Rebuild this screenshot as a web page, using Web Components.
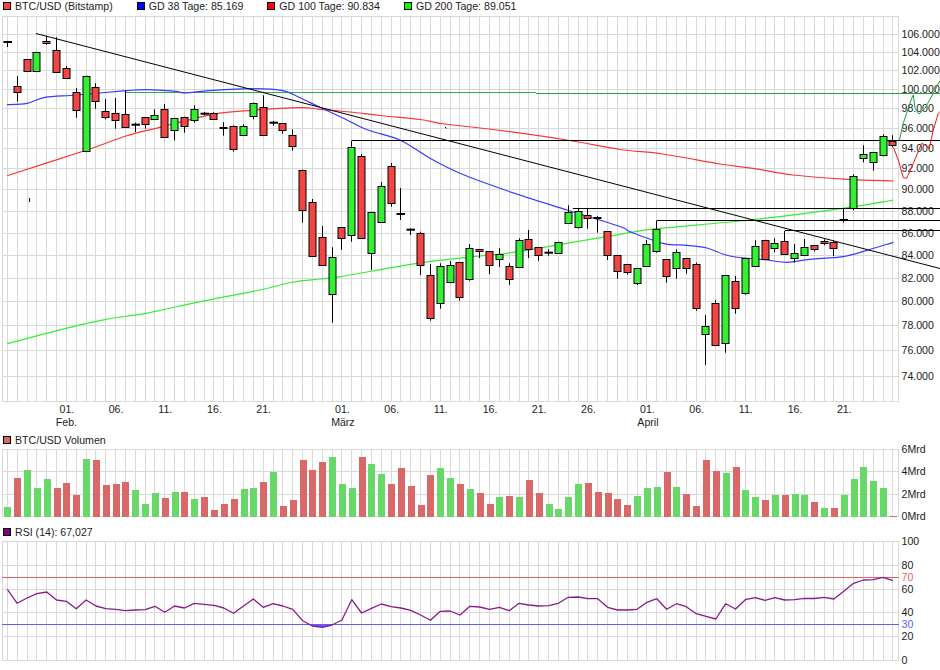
<!DOCTYPE html>
<html>
<head>
<meta charset="utf-8">
<title>BTC/USD</title>
<style>
    html, body { margin: 0; padding: 0; background: #ffffff; overflow: hidden; }
</style>
</head>
<body>
<chart-page>
    <chart-legend>
        <legend-item color="#f44444">BTC/USD (Bitstamp)</legend-item>
        <legend-item color="#0000ff">GD 38 Tage: 85.169</legend-item>
        <legend-item color="#ff0000">GD 100 Tage: 90.834</legend-item>
        <legend-item color="#00ff00">GD 200 Tage: 89.051</legend-item>
    </chart-legend>
    <price-panel></price-panel>
    <chart-legend>
        <legend-item color="#d96868">BTC/USD Volumen</legend-item>
    </chart-legend>
    <volume-panel></volume-panel>
    <chart-legend>
        <legend-item color="#800080">RSI (14): 67,027</legend-item>
    </chart-legend>
    <rsi-panel></rsi-panel>
</chart-page>

<script>
// day i of the chart sits at this x, one grid column per day
const dayX = (i) => 7.35 + i * 9.84;
const snap = (v) => Math.floor(v) + 0.5;
const DAYS = 91;
const RIGHT = 898;
const FONT = "'Liberation Sans', Arial, sans-serif";
const FONT_SIZE = "10.6px";

// [bodyTop, bodyBottom, wickTop, wickBottom, g|r]
const CANDLES = [
    [41.5,42.5,41.5,47,"d"],[85.7,92.3,76,101.7,"r"],[59.3,71.3,59.3,71.3,"r"],[51.7,71.3,51.7,71.3,"g"],
    [41.3,43.3,35.7,44.7,"r"],[49.7,72.3,37.3,72.3,"r"],[67.7,78.3,66,78.3,"r"],[92.3,110.3,88.3,117.7,"r"],
    [75.7,151.3,75.7,151.3,"g"],[86.7,101.3,83.3,108.7,"r"],[110.7,117.3,99,119.3,"r"],[112.7,120.3,98,128.7,"r"],
    [113.7,127.3,90.7,127.3,"r"],[124.2,125.2,122.7,132,"d"],[117.3,124.3,117.3,128.7,"r"],[114.7,119.3,109.3,119.3,"g"],
    [109.3,137.3,104,137.3,"r"],[117.7,130.3,117.7,140.3,"g"],[116.7,126.3,116.7,132.7,"r"],[109.3,120.3,105.3,122.7,"g"],
    [113.2,114.2,112,115.3,"d"],[113.3,119.3,112.3,119.3,"r"],[126.7,128.3,122.3,135.7,"r"],[126.3,149.3,125.3,151.7,"r"],
    [125.7,135.3,124.3,135.3,"g"],[102.7,116.3,102.7,119.3,"g"],[106.7,135.3,95.3,135.3,"r"],[122.2,123.2,121,125.7,"d"],
    [123.3,130.3,123.3,133.7,"r"],[135.3,145.7,129.3,150.7,"r"],[169.5,209.5,169.5,222.7,"r"],[201.5,255.5,199,255.5,"r"],
    [237.3,265.3,226,265.3,"r"],[257.3,294.3,247.3,322.7,"g"],[227.3,238.3,227.3,250,"r"],[147.3,235.3,140.7,241.7,"g"],
    [156.3,238.3,154,238.3,"r"],[211.7,253.3,211.7,270,"g"],[186.3,222.3,182,222.3,"g"],[166.3,203.3,163,206.7,"r"],
    [213.5,214.5,188,220,"d"],[229.2,230.2,228.3,235,"d"],[233.3,265.3,231.7,275,"r"],[275.3,318.3,264,320.7,"r"],
    [266.3,303.3,263.3,308.7,"g"],[265.3,282.3,261,283.3,"g"],[262.3,297.3,262.3,300.7,"r"],[248.3,279.3,244,280.7,"g"],
    [249.3,251.3,249.3,258,"r"],[251.3,265.3,251.3,274,"r"],[254.3,259.3,248.3,267,"g"],[266.3,279.3,263.3,284.7,"r"],
    [240.3,267.3,238.3,267.3,"g"],[239.3,249.3,230,258,"r"],[247.3,255.3,247.3,260.7,"r"],[252.2,253.2,249.3,255.7,"d"],
    [241.7,253.3,241.7,253.3,"g"],[212.3,223.3,205.3,223.3,"g"],[210.7,227.3,208.7,228.7,"g"],[215.3,218.3,208.7,228.7,"r"],
    [216.7,218.3,216,232.7,"r"],[231.3,255.3,231.3,260,"r"],[255.3,271.3,255.3,278.7,"r"],[264.3,272.3,264.3,274.7,"r"],
    [268.3,282.5,268.3,285,"g"],[244.3,266.3,240,266.3,"g"],[228.7,250.7,220.5,252.7,"g"],[259.3,276.3,259.3,282.7,"r"],
    [252.3,268.3,249.3,278.7,"g"],[258.3,268.3,258.3,273.7,"r"],[264.3,308.3,262.7,310.7,"r"],[325.7,334.3,315,365,"g"],
    [303.3,345.3,300,345.3,"r"],[275.3,343.3,275.3,352.7,"g"],[281.3,308.3,276,313.7,"r"],[257.7,293.3,257.7,294.7,"g"],
    [245.7,266.3,240.3,266.3,"g"],[239.7,259.3,239.7,259.3,"r"],[243.3,248.3,238.3,252.3,"g"],[240.7,254.3,231,254.3,"r"],
    [253.3,258.3,244,262.7,"g"],[247.3,255.3,239,255.3,"g"],[245.3,249.3,245.3,251.3,"r"],[241.3,243.3,239.3,245.3,"r"],
    [242.3,248.3,240.7,256,"r"],[219.5,220.5,208.3,222.7,"d"],[176.3,208.3,174.3,210.3,"g"],[154.3,158.3,145.3,162.3,"g"],
    [152.3,162.3,152.3,170.7,"g"],[136.3,155.3,134.3,156.3,"g"],[141.3,145.3,135.3,147.3,"r"]
];

// [top of bar, g|r] per day
const VOLUME = [
    [507,"g"],[478,"r"],[470,"g"],[488,"g"],[479,"g"],[488,"r"],[483,"r"],[495,"r"],[459,"g"],[460,"r"],
    [485,"r"],[484,"r"],[482,"r"],[490,"g"],[504,"g"],[493,"g"],[498,"r"],[492,"g"],[492,"r"],[499,"g"],
    [497,"r"],[510,"r"],[504,"r"],[499,"r"],[489,"g"],[488,"g"],[482,"r"],[472,"g"],[506,"r"],[500,"r"],
    [460,"r"],[470,"r"],[462,"r"],[457,"g"],[484,"g"],[488,"g"],[457,"r"],[464,"g"],[474,"g"],[484,"r"],
    [468,"r"],[486,"r"],[505,"r"],[475,"r"],[468,"g"],[478,"g"],[484,"r"],[489,"g"],[493,"r"],[504,"r"],
    [497,"g"],[496,"r"],[497,"g"],[480,"r"],[493,"r"],[504,"g"],[509,"g"],[497,"g"],[484,"g"],[483,"r"],
    [492,"r"],[493,"r"],[499,"r"],[505,"r"],[496,"g"],[488,"g"],[487,"g"],[472,"r"],[487,"g"],[494,"r"],
    [506,"r"],[460,"r"],[471,"r"],[473,"g"],[467,"r"],[490,"g"],[497,"g"],[500,"r"],[495,"g"],[495,"r"],
    [494,"g"],[495,"g"],[502,"r"],[508,"g"],[508,"r"],[495,"g"],[479,"g"],[467,"g"],[481,"g"],[488,"g"],
    [516,"r"]
];

const RSI = [
    589.3,603.3,598,593.7,592,600,601.3,608.7,600,606,608.7,609.3,610.7,610,609.7,606.3,612.3,606,608,603.3,
    604.3,605.3,608,613.3,606,599,607.3,603.7,606,609.3,620.7,626,627.3,625,620,599.7,613,608.3,604,606.7,
    608,610.3,615,620.3,611.3,611,615,606.3,607,609.3,607.3,610.7,603.3,605,606,605.7,603.3,597.3,597,598.7,
    598.7,607.3,610,610,609.3,602.3,598.7,609.3,603.7,606.7,613.7,616.3,619,603.7,609,599.7,597.7,600.3,597.7,600,
    599.7,598.3,598.5,597.3,599,591.3,583.3,580,579.7,577.3,580.7
];

const GD38 = [[7,104.7],[27,103.3],[45,97.3],[77,95],[126,90.7],[146,89.7],[176,91.3],[185,93],[213,90.3],[253,88.7],[283,90.7],[300,97.7],[320,107.3],[345,119],[368,130],[400,140],[430,158.3],[460,173.3],[507,190.7],[567,210],[620,226.5],[630,231.7],[663,243.3],[687,245.3],[707,248],[730,256],[767,260],[787,262.3],[810,259.3],[843,256.7],[867,250.3],[893.5,242.3]];
const GD100 = [[7,175.7],[86,150.3],[126,136],[160,127.3],[213,114.3],[253,110.3],[300,107.7],[320,109.3],[350,112],[380,115.5],[420,119.5],[445,124],[497,130],[567,140],[620,149.5],[663,154],[720,164],[753,168.3],[793,175],[847,179.3],[893.5,181]];
const GD200 = [[7,343.7],[66,328.3],[106,319.3],[146,313.3],[200,301.7],[260,290],[293,282],[320,279],[340,276.7],[417,263.3],[467,257.3],[507,253.3],[567,243.3],[620,234.3],[657,228.7],[750,220],[843,208.3],[893.5,200]];
const REDZIG = [[893.3,147.3],[898.3,160],[903.3,177.7],[906.7,178.3],[913.3,163.3],[921.7,143.3],[925,145],[929.3,148.3],[933.3,130],[938.3,113.3],[940,111.7]];
const GREENZIG = [[899.3,140.7],[903.3,123.3],[911.7,98.3],[913.3,95],[915,108.3],[919,114],[925,108.3],[933.3,93.3],[940,80.7]];

const line = (pts, color, w) =>
    `<polyline points="${pts.map((p) => p.join(",")).join(" ")}" fill="none" stroke="${color}" stroke-width="${w}" stroke-linejoin="round"/>`;

// moving averages are soft curves, so run a catmull-rom through the read points
const curve = (pts, color, w) => {
    let d = `M${pts[0][0]},${pts[0][1]}`;
    for (let i = 0; i < pts.length - 1; i++) {
        const p0 = pts[i - 1] || pts[i];
        const p1 = pts[i];
        const p2 = pts[i + 1];
        const p3 = pts[i + 2] || p2;
        const c1x = (p1[0] + (p2[0] - p0[0]) / 6).toFixed(1);
        const c1y = (p1[1] + (p2[1] - p0[1]) / 6).toFixed(1);
        const c2x = (p2[0] - (p3[0] - p1[0]) / 6).toFixed(1);
        const c2y = (p2[1] - (p3[1] - p1[1]) / 6).toFixed(1);
        d += ` C${c1x},${c1y} ${c2x},${c2y} ${p2[0]},${p2[1]}`;
    }
    return `<path d="${d}" fill="none" stroke="${color}" stroke-width="${w}"/>`;
};

const seg = (x1, y1, x2, y2, color, w) =>
    `<line x1="${x1}" y1="${y1}" x2="${x2}" y2="${y2}" stroke="${color}" stroke-width="${w}"/>`;

const label = (x, y, s, anchor, color) =>
    `<text x="${x}" y="${y}" text-anchor="${anchor || "start"}" fill="${color || "#1c1c1c"}">${s}</text>`;

// whole page, panels and legends stacked by flow
class ChartPage extends HTMLElement {
    constructor() {
        super();
        this.attachShadow({ mode: "open" });
        this.shadowRoot.innerHTML = `
            <style>
                :host {
                    display: flex;
                    flex-direction: column;
                    width: 940px;
                    height: 670px;
                    overflow: hidden;
                    background: #ffffff;
                    color: #1c1c1c;
                    font-family: ${FONT};
                    font-size: ${FONT_SIZE};
                }
            </style>
            <slot></slot>
        `;
    }
}

class ChartLegend extends HTMLElement {
    constructor() {
        super();
        this.attachShadow({ mode: "open" });
        this.shadowRoot.innerHTML = `
            <style>
                :host {
                    display: flex;
                    gap: 24px;
                    height: 12px;
                    align-items: center;
                    padding-left: 3px;
                }
            </style>
            <slot></slot>
        `;
    }
}

class LegendItem extends HTMLElement {
    constructor() {
        super();
        this.attachShadow({ mode: "open" });
        this.shadowRoot.innerHTML = `
            <style>
                :host {
                    display: flex;
                    align-items: center;
                    gap: 4px;
                    white-space: nowrap;
                    line-height: 12px;
                }
                .swatch {
                    width: 6px;
                    height: 6px;
                    border: 1px solid #000000;
                    background: ${this.getAttribute("color")};
                }
            </style>
            <span class="swatch"></span><slot></slot>
        `;
    }
}

// base for the three plots: draws the grid, the subclass draws what is on it
class ChartPanel extends HTMLElement {
    constructor() {
        super();
        this.attachShadow({ mode: "open" });
    }

    connectedCallback() {
        const { top, height, rows, gridBottom } = this.frame();
        let grid = "";
        for (const y of rows) grid += seg(2, y + 0.5, RIGHT + 1, y + 0.5, "#d9d9d9", 1);
        for (let i = 0; i < DAYS; i++) {
            const x = snap(dayX(i));
            grid += seg(x, rows[0], x, gridBottom + 1, "#d9d9d9", 1);
        }
        grid += seg(2.5, rows[0], 2.5, gridBottom + 1, "#d9d9d9", 1);
        grid += seg(RIGHT + 0.5, rows[0], RIGHT + 0.5, gridBottom + 1, "#d9d9d9", 1);

        this.shadowRoot.innerHTML = `
            <style>
                :host { display: block; height: ${height}px; }
                svg { display: block; overflow: visible; font-family: ${FONT}; font-size: ${FONT_SIZE}; }
            </style>
            <svg width="940" height="${height}" viewBox="0 ${top} 940 ${height}">
                ${grid}
                ${this.plot()}
            </svg>
        `;
    }
}

class PricePanel extends ChartPanel {
    frame() {
        return {
            top: 12,
            height: 422,
            gridBottom: 401,
            rows: [16, 34, 52, 70, 89, 108, 128, 148, 168, 189, 211, 233, 255, 278, 301, 325, 350, 376, 401]
        };
    }

    plot() {
        let out = "";
        const rows = [34, 52, 70, 89, 108, 128, 148, 168, 189, 211, 233, 255, 278, 301, 325, 350, 376];
        rows.forEach((y, n) => {
            out += label(901.5, y + 4, `${106 - n * 2}.000`);
        });

        // date axis
        const dates = [[6,"01."],[11,"06."],[16,"11."],[21,"16."],[26,"21."],[34,"01."],[39,"06."],[44,"11."],[49,"16."],[54,"21."],[59,"26."],[65,"01."],[70,"06."],[75,"11."],[80,"16."],[85,"21."]];
        for (const [i, s] of dates) out += label(dayX(i) + 0.5, 413, s, "middle");
        out += label(dayX(6), 426, "Feb.", "middle");
        out += label(dayX(34) + 1, 426, "März", "middle");
        out += label(dayX(65) + 1, 426, "April", "middle");

        // averages under the candles
        out += seg(126, 92.5, 536, 92.5, "#22b14c", 1);
        out += seg(536, 93.5, 940, 93.5, "#22a040", 1);
        out += curve(GD200, "#33ee33", 1.2);
        out += curve(GD100, "#f83838", 1.2);
        out += curve(GD38, "#3a3aff", 1.2);

        // trend lines
        out += seg(36, 33.5, 940, 268.5, "#000", 1);
        out += seg(352, 140.5, 940, 140.5, "#000", 1);
        out += seg(573, 208.5, 940, 208.5, "#000", 1);
        out += seg(657, 220.5, 940, 220.5, "#000", 1);
        out += seg(785, 230.5, 940, 230.5, "#000", 1);
        out += seg(29.5, 198, 29.5, 202, "#000", 1);
        out += seg(445, 127, 446.5, 128.5, "#000", 1);
        out += line(GREENZIG, "#1e9e3c", 1);
        out += line(REDZIG, "#f01818", 1);

        CANDLES.forEach((c, i) => {
            const x = snap(dayX(i));
            const [top, bottom, wickTop, wickBottom, kind] = c;
            out += seg(x, wickTop, x, wickBottom, "#000", 1);
            if (kind === "d") {
                out += seg(x - 4, top + 0.5, x + 4.5, top + 0.5, "#000", 2);
            } else {
                const fill = kind === "g" ? "#33f033" : "#f44444";
                out += `<rect x="${x - 3.5}" y="${Math.round(top) + 0.5}" width="7" height="${Math.max(1, Math.round(bottom) - Math.round(top))}" fill="${fill}" stroke="#000" stroke-width="1"/>`;
            }
        });
        return out;
    }
}

class VolumePanel extends ChartPanel {
    frame() {
        return { top: 446, height: 80, gridBottom: 516, rows: [449, 471, 494, 516] };
    }

    plot() {
        let out = "";
        VOLUME.forEach(([top, kind], i) => {
            const x = Math.round(dayX(i) - 3);
            const fill = kind === "g" ? "#68d968" : "#d96868";
            out += `<rect x="${x}" y="${top}" width="7" height="${517 - top}" fill="${fill}"/>`;
        });
        [[449,"6Mrd"],[471,"4Mrd"],[494,"2Mrd"],[516,"0Mrd"]].forEach(([y, s]) => {
            out += label(901.5, y + 4, s);
        });
        return out;
    }
}

class RsiPanel extends ChartPanel {
    frame() {
        return { top: 538, height: 127, gridBottom: 660, rows: [541, 565, 589, 612, 636, 660] };
    }

    plot() {
        let out = "";
        [[541,"100"],[565,"80"],[589,"60"],[612,"40"],[636,"20"],[660,"0"]].forEach(([y, s]) => {
            out += label(901.5, y + 4, s);
        });
        out += label(901.5, 581, "70", "start", "#f06060");
        out += label(901.5, 628, "30", "start", "#5c5cff");
        out += seg(2, 577.5, RIGHT + 1, 577.5, "#e86464", 1);
        out += seg(2, 624.5, RIGHT + 1, 624.5, "#5c5cff", 1);

        // oversold stretch under the 30 line is filled
        const under = [[309.5, 624.5]];
        for (const i of [31, 32, 33]) under.push([dayX(i), RSI[i]]);
        under.push([334, 624.5]);
        out += `<polygon points="${under.map((p) => p.join(",")).join(" ")}" fill="#5c5cff"/>`;

        out += line(RSI.map((y, i) => [dayX(i), y]), "#8a1a8a", 1.3);
        return out;
    }
}

customElements.define("chart-page", ChartPage);
customElements.define("chart-legend", ChartLegend);
customElements.define("legend-item", LegendItem);
customElements.define("price-panel", PricePanel);
customElements.define("volume-panel", VolumePanel);
customElements.define("rsi-panel", RsiPanel);
</script>
</body>
</html>
